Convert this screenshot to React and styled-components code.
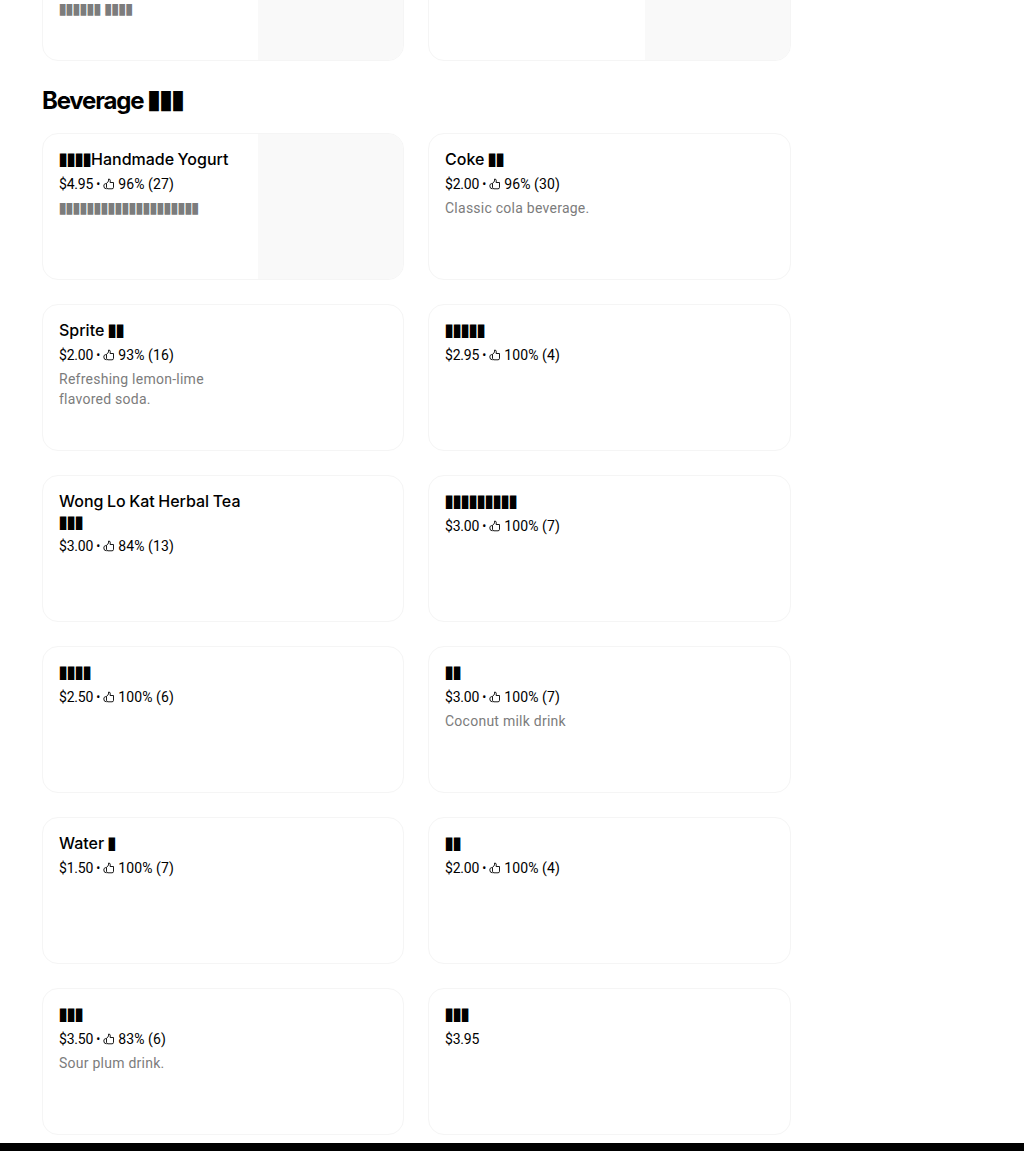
import React from 'react';
import styled, { createGlobalStyle } from 'styled-components';

const GlobalStyle = createGlobalStyle`
    html, body {
        margin: 0;
        padding: 0;
        background: #fff;
        color: #000;
        font-family: Inter, "Liberation Sans", sans-serif;
    }
`;

const Page = styled.div`
    position: relative;
    height: 1151px;
    overflow: hidden;
    display: flex;
    flex-direction: column;
`;

const Content = styled.main`
    width: 749px;
    margin: -86px 0 0 42px;
    flex: 1;
`;

const Grid = styled.div`
    display: grid;
    grid-template-columns: 362px 363px;
    grid-auto-rows: 147px;
    gap: 24px;
`;

const Heading = styled.h2`
    margin: 24px 0 16px;
    height: 32px;
    font-size: 24px;
    line-height: 32px;
    font-weight: 700;
    letter-spacing: -1.2px;
`;

const Card = styled.article`
    box-sizing: border-box;
    display: flex;
    justify-content: space-between;
    border: 1px solid #f5f5f5;
    border-radius: 16px;
    overflow: hidden;
    background: #fff;
`;

const Body = styled.div`
    width: 190px;
    padding: 15px 0 0 16px;
`;

const Photo = styled.div`
    width: 145px;
    background: #f9f9f9;
`;

const Title = styled.div`
    font-size: 16px;
    line-height: 20.5px;
    font-weight: 500;
    word-spacing: -0.75px;
`;

const Meta = styled.div`
    display: flex;
    align-items: center;
    gap: 3px;
    margin-top: 4px;
    font-family: Roboto, Inter, sans-serif;
    font-size: 14px;
    line-height: 20px;
    white-space: nowrap;
`;

const Price = styled.span`
    letter-spacing: -0.2px;
`;

const Rating = styled.span`
    letter-spacing: 0.1px;
`;

const Dot = styled.span`
    font-size: 12px;
`;

const Desc = styled.div`
    margin-top: 4px;
    font-family: Roboto, Inter, sans-serif;
    font-size: 14px;
    line-height: 20px;
    letter-spacing: 0.25px;
    color: #7c7c7c;
`;

const Tofu = styled.span`
    margin: 0 0.12em 0 -0.12em;
    font-family: "DejaVu Sans Mono", monospace;
    font-size: 1.42em;
    line-height: 0;
    letter-spacing: -0.25em;
    vertical-align: -1px;
`;

const Footer = styled.footer`
    height: 8px;
    background: #000;
`;

const Thumb = () => (
    <svg width="12" height="12" viewBox="0 0 12 12" fill="none" stroke="#000" strokeWidth="0.9">
        <path d="M3.5 5.5 L5.6 3 L5.6 1 Q7.3 1 7.3 2.6 L7.1 4.5 L10.5 4.5 L10.5 9.3 Q10.5 10.8 9 10.8 L5 10.8 Q3.5 10.8 3.5 9.3 Z" />
        <path d="M3.5 5.7 H2.2 Q0.8 6 0.8 8 Q0.8 10.8 3.5 10.8" />
    </svg>
);

const t = n => '\u25AE'.repeat(n);

const items = [
    { title: <><Tofu>{t(6)}</Tofu><br /><Tofu>{t(6)}</Tofu></>, price: '$4.50', rating: '90% (10)', desc: <><Tofu>{t(6)}</Tofu> <Tofu>{t(4)}</Tofu></>, photo: true },
    { title: <Tofu>{t(6)}</Tofu>, price: '$4.50', rating: '90% (10)', photo: true },
    { title: <><Tofu>{t(4)}</Tofu>Handmade Yogurt</>, price: '$4.95', rating: '96% (27)', desc: <Tofu>{t(20)}</Tofu>, photo: true },
    { title: <>Coke <Tofu>{t(2)}</Tofu></>, price: '$2.00', rating: '96% (30)', desc: 'Classic cola beverage.' },
    { title: <>Sprite <Tofu>{t(2)}</Tofu></>, price: '$2.00', rating: '93% (16)', desc: 'Refreshing lemon-lime flavored soda.' },
    { title: <Tofu>{t(5)}</Tofu>, price: '$2.95', rating: '100% (4)' },
    { title: <>Wong Lo Kat Herbal Tea <Tofu>{t(3)}</Tofu></>, price: '$3.00', rating: '84% (13)' },
    { title: <Tofu>{t(9)}</Tofu>, price: '$3.00', rating: '100% (7)' },
    { title: <Tofu>{t(4)}</Tofu>, price: '$2.50', rating: '100% (6)' },
    { title: <Tofu>{t(2)}</Tofu>, price: '$3.00', rating: '100% (7)', desc: 'Coconut milk drink' },
    { title: <>Water <Tofu>{t(1)}</Tofu></>, price: '$1.50', rating: '100% (7)' },
    { title: <Tofu>{t(2)}</Tofu>, price: '$2.00', rating: '100% (4)' },
    { title: <Tofu>{t(3)}</Tofu>, price: '$3.50', rating: '83% (6)', desc: 'Sour plum drink.' },
    { title: <Tofu>{t(3)}</Tofu>, price: '$3.95' },
];

const MenuItem = ({ item }) => (
    <Card>
        <Body>
            <Title>{item.title}</Title>
            <Meta>
                <Price>{item.price}</Price>
                {item.rating && <><Dot>•</Dot><Thumb /><Rating>{item.rating}</Rating></>}
            </Meta>
            {item.desc && <Desc>{item.desc}</Desc>}
        </Body>
        {item.photo && <Photo />}
    </Card>
);

const App = () => (
    <Page>
        <GlobalStyle />
        <Content>
            <Grid>
                {items.slice(0, 2).map((item, i) => <MenuItem key={i} item={item} />)}
            </Grid>
            <Heading>Beverage <Tofu>{t(3)}</Tofu></Heading>
            <Grid>
                {items.slice(2).map((item, i) => <MenuItem key={i} item={item} />)}
            </Grid>
        </Content>
        <Footer />
    </Page>
);

export default App;
